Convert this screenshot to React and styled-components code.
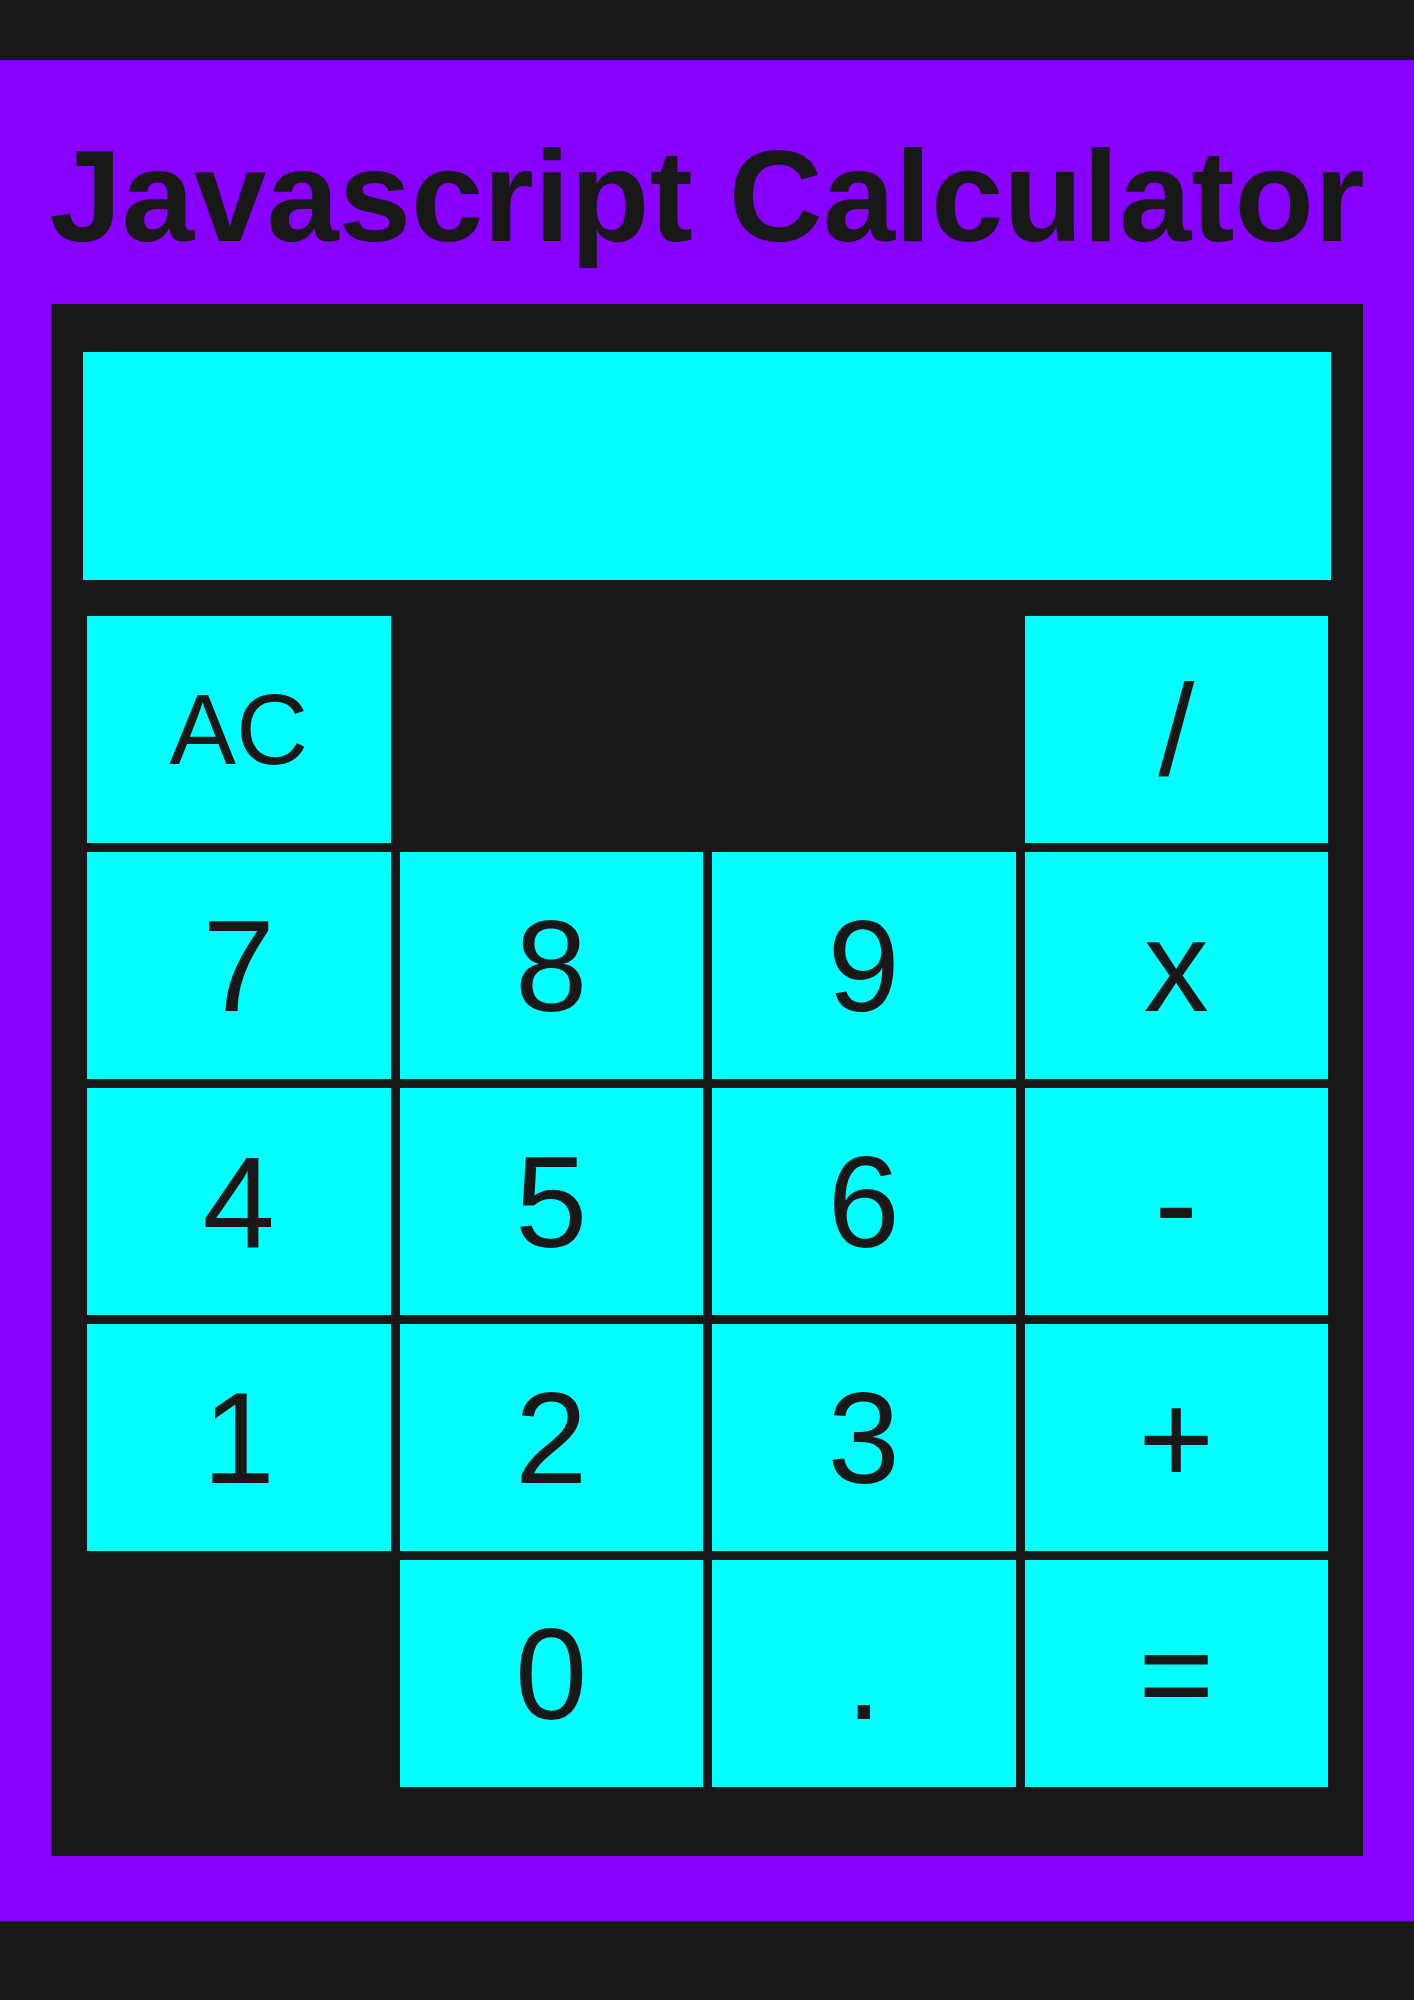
import React from "react";
import styled, { createGlobalStyle } from "styled-components";

const GlobalStyle = createGlobalStyle`
  html, body {
    margin: 0;
    padding: 0;
    background: #181818;
  }
  body {
    font-family: "Liberation Sans", Arial, sans-serif;
  }
`;

const Page = styled.div`
  padding-top: 60px;
  min-height: 2000px;
  box-sizing: border-box;
  background: #181818;
`;

const Stage = styled.main`
  background: #8800ff;
  padding: 71px 51px 65px;
  display: flex;
  flex-direction: column;
  align-items: center;
`;

const Title = styled.h1`
  margin: 0 0 43px;
  font-family: "Liberation Sans", Arial, sans-serif;
  font-weight: 700;
  font-size: 130px;
  line-height: 130px;
  color: #181818;
  white-space: nowrap;
  text-align: center;
`;

const Calculator = styled.div`
  align-self: stretch;
  background: #181818;
  padding: 48px 32px 69px;
  display: flex;
  flex-direction: column;
  gap: 36px;
`;

const Display = styled.div`
  height: 228px;
  background: #00ffff;
  font-size: 100px;
  color: #181818;
  display: flex;
  align-items: center;
  justify-content: flex-end;
  padding: 0 24px;
  box-sizing: border-box;
`;

const Keypad = styled.div`
  display: grid;
  grid-template-columns: repeat(4, 1fr);
  grid-auto-rows: 227px;
  gap: 9px;
  margin: 0 3px 0 4px;
`;

const Key = styled.button`
  grid-column: ${(p) => p.$col};
  grid-row: ${(p) => p.$row};
  border: none;
  margin: 0;
  padding: 0;
  background: #00ffff;
  color: #181818;
  font-family: "Liberation Sans", Arial, sans-serif;
  font-size: ${(p) => (p.$small ? "100px" : "130px")};
  display: flex;
  align-items: center;
  justify-content: center;
  cursor: pointer;
`;

const keys = [
  { label: "AC", col: 1, row: 1, small: true },
  { label: "/", col: 4, row: 1 },
  { label: "7", col: 1, row: 2 },
  { label: "8", col: 2, row: 2 },
  { label: "9", col: 3, row: 2 },
  { label: "x", col: 4, row: 2 },
  { label: "4", col: 1, row: 3 },
  { label: "5", col: 2, row: 3 },
  { label: "6", col: 3, row: 3 },
  { label: "-", col: 4, row: 3 },
  { label: "1", col: 1, row: 4 },
  { label: "2", col: 2, row: 4 },
  { label: "3", col: 3, row: 4 },
  { label: "+", col: 4, row: 4 },
  { label: "0", col: 2, row: 5 },
  { label: ".", col: 3, row: 5 },
  { label: "=", col: 4, row: 5 },
];

export default function App() {
  return (
    <>
      <GlobalStyle />
      <Page>
        <Stage>
          <Title>Javascript Calculator</Title>
          <Calculator>
            <Display />
            <Keypad>
              {keys.map((k) => (
                <Key key={k.label} $col={k.col} $row={k.row} $small={k.small}>
                  {k.label}
                </Key>
              ))}
            </Keypad>
          </Calculator>
        </Stage>
      </Page>
    </>
  );
}
